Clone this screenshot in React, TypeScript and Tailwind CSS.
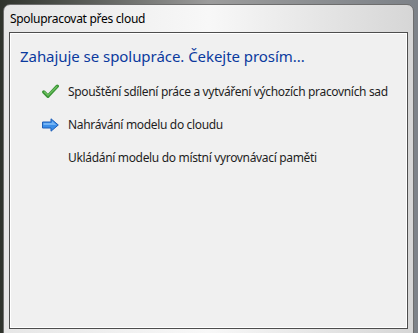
const font = { fontFamily: '"Segoe UI", "Noto Sans", "Open Sans", sans-serif' };

function CheckIcon() {
  return (
    <svg width="17" height="15" viewBox="0 0 17 15" className="shrink-0">
      <path d="M1.8 8 L6 12.2 L15.3 2.2" fill="none" stroke="#3d9638" strokeWidth="3.4" strokeLinecap="round" strokeLinejoin="round" />
      <path d="M2.4 8 L6 11.4 L14.8 2.6" fill="none" stroke="#72c564" strokeWidth="1.1" strokeLinecap="round" strokeLinejoin="round" />
    </svg>
  );
}

function ArrowIcon() {
  return (
    <svg width="17" height="14" viewBox="0 0 17 14" className="shrink-0">
      <path d="M0.5 4 H9 V0.8 L16.3 7 L9 13.2 V10 H0.5 Z" fill="#3c8ee8" stroke="#1f5fb8" strokeWidth="1" strokeLinejoin="round" />
      <path d="M1.5 5 H10 V3 L14.5 7 H1.5 Z" fill="#8cc4fb" opacity="0.7" />
    </svg>
  );
}

function Step({ icon, text }: { icon?: React.ReactNode; text: string }) {
  return (
    <div className="flex h-[33px] items-center">
      <div className="flex w-[26px] justify-start">{icon}</div>
      <span className="whitespace-nowrap text-[12px] tracking-[-0.33px] text-[#1e1e1e]">{text}</span>
    </div>
  );
}

export default function App() {
  return (
    <div
      className="flex h-[333px] w-[418px] flex-col overflow-hidden bg-gradient-to-r from-[#2f332c] via-[#9c9c9c] to-[#7d8288] pl-[3px] pr-[4px] pt-[4px]"
      style={font}
    >
      <div className="flex h-[340px] shrink-0 flex-col rounded-t-[7px] border border-[#6e6e6e] bg-gradient-to-r from-[#e6e6e6] via-[#f8f8f8] to-[#d6d6d6] px-[5px]">
        <div className="flex h-[27px] shrink-0 items-center pl-[1px] text-[12px] tracking-[-0.3px] text-black">
          Spolupracovat přes cloud
        </div>
        <div className="flex h-[297px] shrink-0 flex-col border border-[#4d4d4d] bg-[#f0f0f0] pl-[10px] pt-[12px] shadow-[inset_0_0_0_1px_#ffffff]">
          <h1 className="whitespace-nowrap text-[15px] leading-[22px] tracking-[-0.05px] text-[#0b3a9e]">
            Zahajuje se spolupráce. Čekejte prosím...
          </h1>
          <div className="mt-[8px] flex flex-col pl-[22px]">
            <Step icon={<CheckIcon />} text="Spouštění sdílení práce a vytváření výchozích pracovních sad" />
            <Step icon={<ArrowIcon />} text="Nahrávání modelu do cloudu" />
            <Step text="Ukládání modelu do místní vyrovnávací paměti" />
          </div>
        </div>
      </div>
    </div>
  );
}
